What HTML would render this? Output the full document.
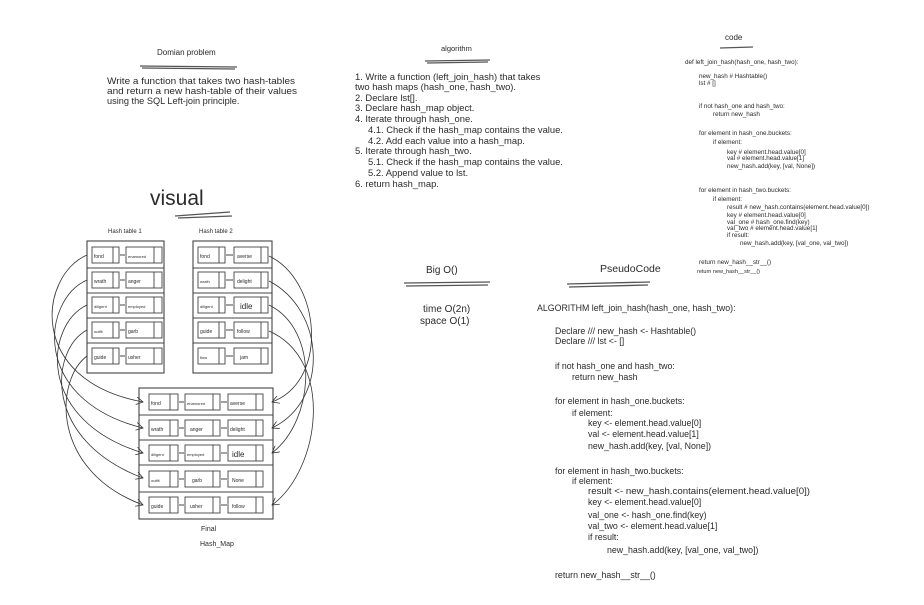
<!DOCTYPE html>
<html><head><meta charset="utf-8"><style>
html,body{margin:0;padding:0;background:#fff;}
svg{display:block;}
text{font-family:"Liberation Sans",sans-serif;fill:#2a2a2a;}
</style></head><body>
<svg width="924" height="605" viewBox="0 0 924 605" xmlns="http://www.w3.org/2000/svg">
<defs>
<marker id="ah" markerWidth="8" markerHeight="8" refX="7" refY="4" orient="auto" markerUnits="userSpaceOnUse">
<path d="M0,0 L7,4 L0,8" fill="none" stroke="#333" stroke-width="0.8"/></marker>
</defs>
<g stroke="#555" stroke-width="1.3" fill="none">
<path d="M140 66 L237 67"/><path d="M142 68 L235 69"/>
<path d="M425 61 L490 60"/><path d="M427 63 L488 62"/>
<path d="M720 48 L753 47"/>
<path d="M175 216 L230 212"/><path d="M178 218 L232 216"/>
<path d="M404 283 L490 282"/><path d="M406 286 L488 285"/>
<path d="M567 284 L650 282"/><path d="M569 287 L648 285"/>
</g>
<text x="157" y="55" font-size="8">Domian problem</text>
<g font-size="9.2">
<text x="107" y="84" textLength="188" lengthAdjust="spacingAndGlyphs">Write a function that takes two hash-tables</text>
<text x="107" y="94" textLength="190" lengthAdjust="spacingAndGlyphs">and return a new hash-table of their values</text>
<text x="107" y="104">using the SQL Left-join principle.</text>
</g>
<text x="441" y="51" font-size="7.5">algorithm</text>
<g font-size="9.4">
<text x="355" y="80">1. Write a function (left_join_hash) that takes</text>
<text x="355" y="90">two hash maps (hash_one, hash_two).</text>
<text x="355" y="101">2. Declare lst[].</text>
<text x="355" y="111">3. Declare hash_map object.</text>
<text x="355" y="122">4. Iterate through hash_one.</text>
<text x="368" y="133">4.1. Check if the hash_map contains the value.</text>
<text x="368" y="144">4.2. Add each value into a hash_map.</text>
<text x="355" y="154">5. Iterate through hash_two.</text>
<text x="368" y="165">5.1. Check if the hash_map contains the value.</text>
<text x="368" y="176">5.2. Append value to lst.</text>
<text x="355" y="187">6. return hash_map.</text>
</g>
<text x="725" y="40" font-size="8">code</text>
<g font-size="6.3">
<text x="685" y="64">def left_join_hash(hash_one, hash_two):</text>
<text x="699" y="78">new_hash # Hashtable()</text>
<text x="699" y="85">lst # []</text>
<text x="699" y="108">if not hash_one and hash_two:</text>
<text x="713" y="116">return new_hash</text>
<text x="699" y="135">for element in hash_one.buckets:</text>
<text x="713" y="144">if element:</text>
<text x="727" y="154">key # element.head.value[0]</text>
<text x="727" y="160">val # element.head.value[1]</text>
<text x="727" y="168">new_hash.add(key, [val, None])</text>
<text x="699" y="192">for element in hash_two.buckets:</text>
<text x="713" y="201">if element:</text>
<text x="727" y="209">result # new_hash.contains(element.head.value[0])</text>
<text x="727" y="217">key # element.head.value[0]</text>
<text x="727" y="224">val_one # hash_one.find(key)</text>
<text x="727" y="230">val_two # element.head.value[1]</text>
<text x="727" y="237">if result:</text>
<text x="740" y="245">new_hash.add(key, [val_one, val_two])</text>
<text x="699" y="264">return new_hash__str__()</text>
</g>
<text x="150" y="205" font-size="21">visual</text>
<text x="426" y="273" font-size="10">Big O()</text>
<text x="423" y="312" font-size="10">time O(2n)</text>
<text x="420" y="324" font-size="10">space O(1)</text>
<text x="600" y="272" font-size="10.5">PseudoCode</text>
<g font-size="8.8">
<text x="537" y="311">ALGORITHM left_join_hash(hash_one, hash_two):</text>
<text x="555" y="334">Declare /// new_hash &lt;- Hashtable()</text>
<text x="555" y="344">Declare /// lst &lt;- []</text>
<text x="555" y="369">if not hash_one and hash_two:</text>
<text x="572" y="380">return new_hash</text>
<text x="555" y="404">for element in hash_one.buckets:</text>
<text x="572" y="416">if element:</text>
<text x="588" y="426">key &lt;- element.head.value[0]</text>
<text x="588" y="437">val &lt;- element.head.value[1]</text>
<text x="588" y="449">new_hash.add(key, [val, None])</text>
<text x="555" y="474">for element in hash_two.buckets:</text>
<text x="572" y="484">if element:</text>
<text x="588" y="494" textLength="222" lengthAdjust="spacingAndGlyphs">result &lt;- new_hash.contains(element.head.value[0])</text>
<text x="588" y="505">key &lt;- element.head.value[0]</text>
<text x="588" y="518">val_one &lt;- hash_one.find(key)</text>
<text x="588" y="529">val_two &lt;- element.head.value[1]</text>
<text x="588" y="540">if result:</text>
<text x="607" y="553">new_hash.add(key, [val_one, val_two])</text>
<text x="555" y="578">return new_hash__str__()</text>
</g>
<text x="697" y="273" font-size="5.5">return new_hash__str__()</text>
<text x="108" y="233" font-size="6">Hash table 1</text>
<text x="199" y="233" font-size="6">Hash table 2</text>
<text x="201" y="531" font-size="7">Final</text>
<text x="200" y="546" font-size="7">Hash_Map</text>
<g stroke="#444" stroke-width="1.1" fill="none">
<rect x="87" y="241" width="77" height="132"/>
<path d="M87 268H164M87 293H164M87 318H164M87 343H164"/>
<rect x="193" y="241" width="79" height="132"/>
<path d="M193 268H272M193 293H272M193 318H272M193 343H272"/>
<rect x="139" y="388" width="134" height="131"/>
<path d="M139 415H273M139 440H273M139 465H273M139 492H273"/>
</g>
<g stroke="#444" stroke-width="0.9" fill="none">
<g id="t1">
<rect x="92" y="247" width="27" height="16"/><path d="M113 247V263"/><rect x="126" y="247" width="36" height="16"/><path d="M154 247V263M120 255H125"/>
</g>
<use href="#t1" y="25"/><use href="#t1" y="50"/><use href="#t1" y="75"/><use href="#t1" y="101"/>
<g id="t2">
<rect x="198" y="247" width="27" height="16"/><path d="M219 247V263"/><rect x="234" y="247" width="34" height="16"/><path d="M261 247V263M226 255H233"/>
</g>
<use href="#t2" y="25"/><use href="#t2" y="50"/><use href="#t2" y="75"/><use href="#t2" y="101"/>
<g id="t3">
<rect x="149" y="394" width="29" height="16"/><path d="M170 394V410"/><rect x="185" y="394" width="35" height="16"/><path d="M213 394V410"/><rect x="228" y="394" width="35" height="16"/><path d="M256 394V410M179 402H184M221 402H227"/>
</g>
<use href="#t3" y="26"/><use href="#t3" y="51"/><use href="#t3" y="77"/><use href="#t3" y="103"/>
</g>
<g font-size="5" >
<text x="94" y="258">fond</text><text x="128" y="258" font-size="4">enamored</text>
<text x="94" y="283">wrath</text><text x="128" y="283">anger</text>
<text x="94" y="308" font-size="4">diligent</text><text x="128" y="308" font-size="4">employed</text>
<text x="94" y="333" font-size="4">outfit</text><text x="128" y="333">garb</text>
<text x="94" y="359">guide</text><text x="128" y="359">usher</text>
<text x="200" y="258">fond</text><text x="237" y="258">averse</text>
<text x="200" y="283" font-size="4">wrath</text><text x="237" y="283">delight</text>
<text x="200" y="308" font-size="4">diligent</text><text x="240" y="309" font-size="8">idle</text>
<text x="200" y="333">guide</text><text x="237" y="333">follow</text>
<text x="200" y="359" font-size="4">flow</text><text x="240" y="359">jam</text>
<text x="151" y="405">fond</text><text x="187" y="405" font-size="4">enamored</text><text x="230" y="405">averse</text>
<text x="151" y="431">wrath</text><text x="190" y="431">anger</text><text x="230" y="431">delight</text>
<text x="151" y="456" font-size="4">diligent</text><text x="187" y="456" font-size="4">employed</text><text x="232" y="457" font-size="8">idle</text>
<text x="151" y="482" font-size="4">outfit</text><text x="192" y="482">garb</text><text x="232" y="482">None</text>
<text x="151" y="508">guide</text><text x="190" y="508">usher</text><text x="232" y="508">follow</text>
</g>
<g stroke="#333" stroke-width="0.8" fill="none" marker-end="url(#ah)">
<path d="M87 255C40 275 25 380 143 402"/>
<path d="M87 280C42 300 30 400 143 428"/>
<path d="M87 305C45 325 35 420 143 453"/>
<path d="M87 330C50 350 42 440 143 478"/>
<path d="M87 356C55 380 50 470 143 505"/>
<path d="M269 256C320 280 330 380 272 402"/>
<path d="M269 281C325 310 330 400 272 428"/>
<path d="M269 305C320 330 315 420 272 453"/>
<path d="M269 331C335 360 320 470 272 505"/>
</g>
</svg>
</body></html>
